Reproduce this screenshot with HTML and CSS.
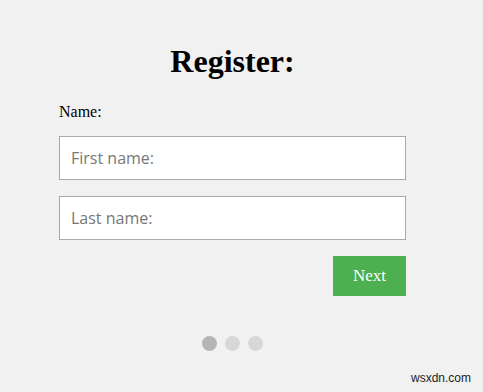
FILE: index.html
```html
<!DOCTYPE html>
<html lang="en">
<head>
  <meta charset="UTF-8">
  <title>Register</title>
  <link rel="stylesheet" href="styles.css">
</head>
<body>
  <form class="reg-form">
    <h1>Register:</h1>
    <div class="tab">
      <p class="label">Name:</p>
      <input class="field" type="text" placeholder="First name:">
      <input class="field" type="text" placeholder="Last name:">
    </div>
    <div class="actions">
      <button type="button" class="next">Next</button>
    </div>
    <div class="steps">
      <span class="step active"></span>
      <span class="step"></span>
      <span class="step"></span>
    </div>
  </form>
  <div class="watermark">wsxdn.com</div>
</body>
</html>
```

FILE: styles.css
```css
* {
  margin: 0;
  padding: 0;
  box-sizing: border-box;
}
body {
  background: #f1f1f1;
  width: 483px;
  height: 392px;
  position: relative;
  overflow: hidden;
  font-family: "Liberation Serif", "Times New Roman", serif;
}
.reg-form {
  width: 347px;
  margin-left: 59px;
  padding-top: 43px;
}
.reg-form h1 {
  text-align: center;
  font-size: 32px;
  font-weight: bold;
  line-height: 37px;
  color: #000;
}
.label {
  font-size: 16px;
  margin-top: 23px;
  line-height: 17px;
}
.field {
  display: block;
  width: 100%;
  height: 44px;
  margin-top: 16px;
  padding: 0 11px;
  border: 1px solid #aaaaaa;
  background: #fff;
  font-family: "Open Sans", "Noto Sans", sans-serif;
  font-size: 16px;
  color: #333;
  outline: none;
}
.field::placeholder {
  color: #777;
}
.actions {
  display: flex;
  justify-content: flex-end;
  margin-top: 16px;
}
.next {
  width: 73px;
  height: 40px;
  border: none;
  background: #4caf50;
  color: #fff;
  font-family: "Liberation Serif", "Times New Roman", serif;
  font-size: 17px;
  cursor: pointer;
}
.steps {
  display: flex;
  justify-content: center;
  gap: 8px;
  margin-top: 40px;
}
.step {
  width: 15px;
  height: 15px;
  border-radius: 50%;
  background: #d7d7d7;
}
.step.active {
  background: #b5b5b5;
}
.watermark {
  position: absolute;
  right: 12px;
  bottom: 7px;
  font-family: "Liberation Sans", Arial, sans-serif;
  font-size: 12px;
  color: #222;
}
```
